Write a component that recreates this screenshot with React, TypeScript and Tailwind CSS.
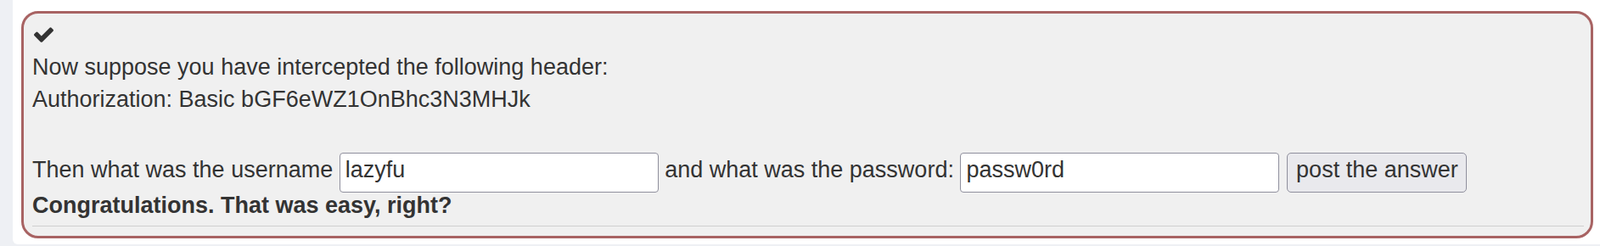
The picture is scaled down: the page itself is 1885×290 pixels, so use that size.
import React from 'react'

function CheckIcon() {
  return (
    <svg viewBox="121 330 1550 1192" width="23" height="18" className="block" fill="#333">
      <path d="M1671 566q0 40-28 68l-724 724-136 136q-28 28-68 28t-68-28l-136-136-362-362q-28-28-28-68t28-68l136-136q28-28 68-28t68 28l294 295 656-657q28-28 68-28t68 28l136 136q28 28 28 68z" />
    </svg>
  )
}

export default function App() {
  return (
    <div className="h-[290px] bg-[#eef0f4] pl-[15px] pb-[2px] font-['Liberation_Sans',Arial,sans-serif] text-[27px] leading-[37.5px] text-[#333]">
      <div className="h-full bg-white rounded-bl-[6px] pt-[13px] pl-[10px] pr-[8px]">
        <div className="h-[268px] border-[3px] border-[#a86363] rounded-[20px] bg-[#f0f0f0] pl-[10px] pr-[8px] pt-[16px]">
          <div className="pl-[2px]">
            <CheckIcon />
          </div>
          <div className="mt-[11px]">Now suppose you have intercepted the following header:</div>
          <div>Authorization: Basic bGF6eWZ1OnBhc3N3MHJk</div>
          <div className="h-[37.5px]" />
          <form className="mt-[6px] flex items-baseline whitespace-pre" onSubmit={e => e.preventDefault()}>
            <span>Then what was the username </span>
            <input
              defaultValue="lazyfu"
              className="box-border h-[47px] w-[376px] rounded-[4px] border border-[#8f8f9d] bg-white pl-[6px] pb-[5px] text-[27px] text-[#333] outline-none"
            />
            <span> and what was the password: </span>
            <input
              defaultValue="passw0rd"
              className="box-border h-[47px] w-[376px] rounded-[4px] border border-[#8f8f9d] bg-white pl-[6px] pb-[5px] text-[27px] text-[#333] outline-none"
            />
            <button
              type="submit"
              className="ml-[9px] box-border h-[47px] w-[212px] rounded-[5px] border border-[#8f8f9d] bg-[#e9e9ed] pb-[5px] text-[27px] text-[#333]"
            >
              post the answer
            </button>
          </form>
          <div className="mt-[-3px] font-bold">Congratulations. That was easy, right?</div>
          <hr className="mt-[5px] border-t border-[#cfcfcf]" />
        </div>
      </div>
    </div>
  )
}
